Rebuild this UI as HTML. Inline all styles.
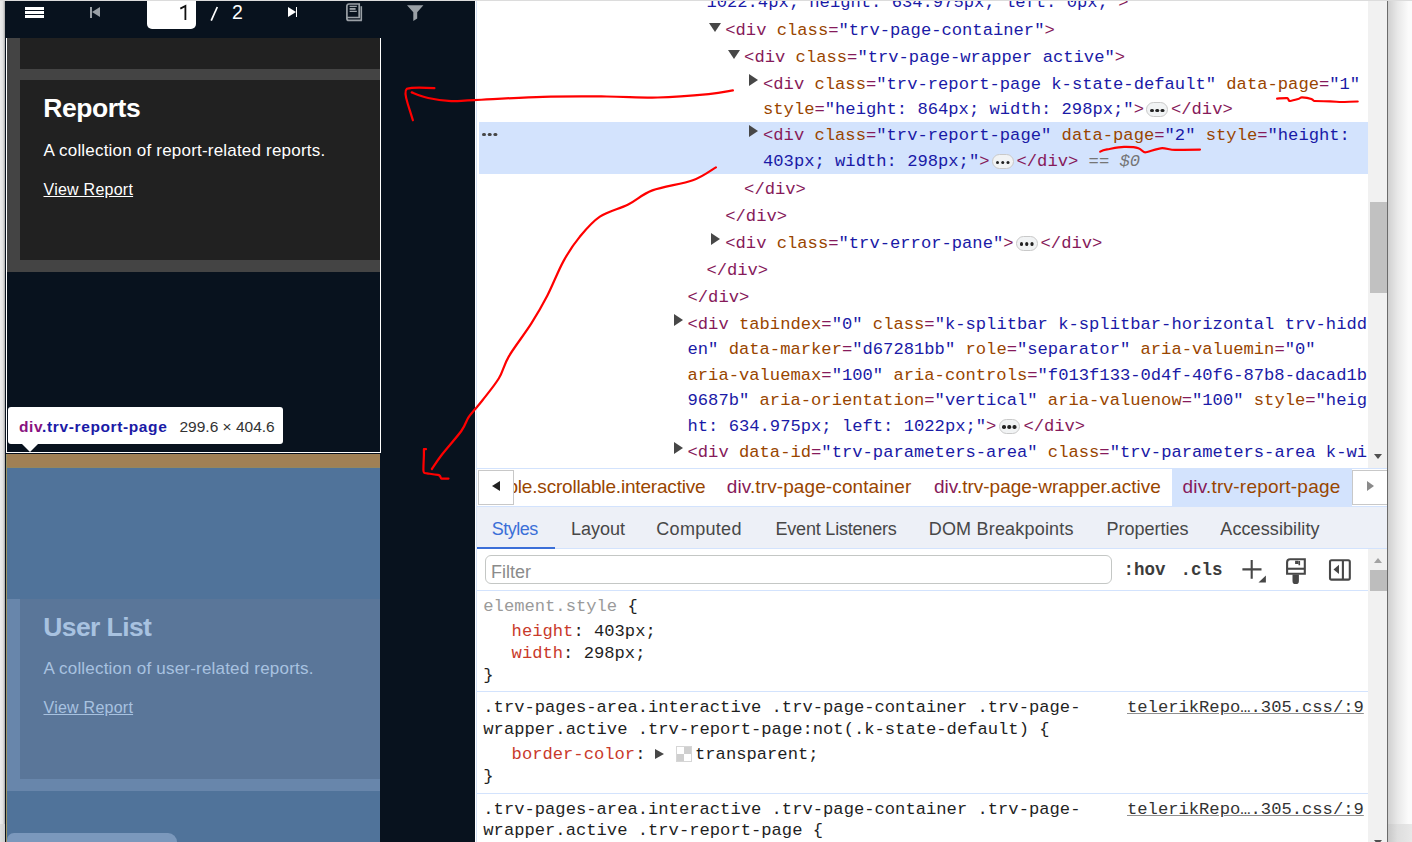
<!DOCTYPE html>
<html><head><meta charset="utf-8">
<style>
*{margin:0;padding:0;box-sizing:border-box}
html,body{width:1412px;height:842px;overflow:hidden;background:#e6e6e6;font-family:"Liberation Sans",sans-serif}
.a{position:absolute}
/* left report viewer */
#viewer{left:5px;top:1px;width:470px;height:841px;background:#08121e;overflow:hidden}
.mono{font-family:"Liberation Mono",monospace}
/* devtools */
#dt{left:475px;top:1px;width:937px;height:841px;background:#fff;overflow:hidden}
.row{position:absolute;white-space:pre;font-family:"Liberation Mono",monospace;font-size:17.17px;line-height:25.5px;height:25.5px}
.t{color:#861a5a}.n{color:#994500}.v{color:#1a1aa6}.g{color:#757575;font-style:italic}
.tri{position:absolute;width:0;height:0}
.tr-r{border-top:6px solid transparent;border-bottom:6px solid transparent;border-left:9px solid #474747}
.tr-d{border-left:6px solid transparent;border-right:6px solid transparent;border-top:9px solid #474747}
.pill{display:inline-block;width:21.5px;height:15.3px;border:1px solid #c9c9c9;border-radius:8px;background:#f1f3f4;vertical-align:-3.3px;margin:0 3px 0 2.5px;position:relative}
.pill:after{content:"";position:absolute;left:2.5px;top:5.5px;width:3.6px;height:3.6px;border-radius:50%;background:#222;box-shadow:5.25px 0 0 #222,10.5px 0 0 #222}
.sg{color:#9a9a9a}.k{color:#1f1f1f}.pr{color:#c93a2b}.lk{color:#333;text-decoration:underline;text-decoration-color:#8f8f8f}
.srow{position:absolute;white-space:pre;font-family:"Liberation Mono",monospace;font-size:17.17px;line-height:22px;height:22px;color:#1f1f1f}
.tab{position:absolute;top:518px;font-size:18px;line-height:22px;color:#474747;white-space:nowrap}
.crumb{position:absolute;top:476px;font-size:19px;line-height:24px;white-space:nowrap}
</style></head><body>

<!-- ============ LEFT VIEWER ============ -->
<div class="a" style="left:0;top:0;width:5px;height:842px;background:linear-gradient(to right,#ececec,#e2e2e2 55%,#c4c4c4 85%,#9a9a9a)"></div>
<div class="a" style="left:0;top:824px;width:5px;height:18px;background:linear-gradient(to right,#dedede,#d6d6d6 60%,#cccccc)"></div>
<div id="viewer" class="a">
  <!-- toolbar icons (coords relative to viewer: x-5, y-1) -->
  <!-- hamburger -->
  <div class="a" style="left:20px;top:6px;width:19px;height:3px;background:#fff"></div>
  <div class="a" style="left:20px;top:10px;width:19px;height:3px;background:#fff"></div>
  <div class="a" style="left:20px;top:14px;width:19px;height:3px;background:#fff"></div>
  <!-- first page -->
  <div class="a" style="left:85px;top:6px;width:2px;height:11px;background:#9aa0a6"></div>
  <div class="a" style="left:87px;top:6px;width:0;height:0;border-top:5.5px solid transparent;border-bottom:5.5px solid transparent;border-right:8px solid #9aa0a6"></div>
  <!-- page input -->
  <div class="a" style="left:141.5px;top:-2px;width:49px;height:30px;background:#fff;border-radius:0 0 5px 5px"></div>
  <svg class="a" style="left:170px;top:2px" width="20" height="20" viewBox="0 0 20 20"><path d="M5.3 5.6L10.4 3V17.1" fill="none" stroke="#111" stroke-width="1.8" stroke-linejoin="miter"/></svg>
  <svg class="a" style="left:204px;top:4px" width="16" height="18" viewBox="0 0 16 18"><path d="M2.2 15.6L8.3 2" stroke="#fff" stroke-width="1.7"/></svg>
  <div class="a" style="left:227px;top:-1px;font-size:19.5px;line-height:24px;color:#fff">2</div>
  <!-- last page -->
  <div class="a" style="left:282.6px;top:6px;width:0;height:0;border-top:5.1px solid transparent;border-bottom:5.1px solid transparent;border-left:8px solid #fff"></div>
  <div class="a" style="left:290.5px;top:6px;width:1.7px;height:10.2px;background:#fff"></div>
  <!-- doc icon -->
  <svg class="a" style="left:340px;top:2px" width="20" height="20" viewBox="0 0 20 20">
    <g fill="none" stroke="#9aa0a6">
      <path d="M1.9 15.5V3a2 2 0 0 1 2-2h10.3v13.5H1.9" stroke-width="1.7"/>
      <path d="M1.9 14.5v0.9a2 2 0 0 0 2 2h13" stroke-width="1.7"/>
      <path d="M16.3 3.2v14.2" stroke-width="1.6"/>
      <path d="M4.6 3.4h7.2M4.6 8.3h7.2" stroke-width="1.3"/>
      <path d="M4.6 5.9h6" stroke-width="1.9"/>
    </g>
  </svg>
  <!-- filter icon -->
  <svg class="a" style="left:401px;top:3px" width="18" height="18" viewBox="0 0 18 18">
    <path d="M1 1.3h16.4l-6.2 7V14.5L7.3 17V8.3z" fill="#9aa0a6"/>
  </svg>

  <!-- page 1 (relative coords: x-5, y-1) -->
  <div class="a" style="left:1px;top:37px;width:375px;height:415px;border:1px solid #fff;border-top:none"></div>
  <div class="a" style="left:2px;top:37px;width:373px;height:234px;background:#444"></div>
  <div class="a" style="left:15px;top:37px;width:360px;height:31px;background:#212121"></div>
  <div class="a" style="left:15px;top:79px;width:360px;height:180px;background:#212121"></div>
  <div class="a" style="left:38.3px;top:92px;font-size:26.5px;font-weight:bold;color:#fff;line-height:30px;white-space:nowrap;letter-spacing:-0.45px">Reports</div>
  <div class="a" style="left:38.5px;top:139.5px;font-size:17px;color:#fff;line-height:20px;white-space:nowrap;letter-spacing:0.2px">A collection of report-related reports.</div>
  <div class="a" style="left:38.5px;top:179px;font-size:16px;color:#fff;line-height:20px;white-space:nowrap;text-decoration:underline;letter-spacing:0.25px">View Report</div>

  <!-- page 2 overlay -->
  <div class="a" style="left:1px;top:453px;width:1px;height:400px;background:#9a9468"></div>
  <div class="a" style="left:2px;top:453px;width:373px;height:13px;background:#a08055"></div><div class="a" style="left:2px;top:466px;width:373px;height:1px;background:#94875f"></div>
  <div class="a" style="left:2px;top:467px;width:373px;height:380px;background:#50739a"></div>
  <div class="a" style="left:2px;top:598px;width:373px;height:192px;background:#6886ab"></div>
  <div class="a" style="left:15px;top:598px;width:360px;height:180px;background:#5a7699"></div>
  <div class="a" style="left:38.3px;top:611px;font-size:26.5px;font-weight:bold;color:#a8c2e0;line-height:30px;white-space:nowrap;letter-spacing:-0.6px">User List</div>
  <div class="a" style="left:38.5px;top:657.5px;font-size:17px;color:#a8c2e0;line-height:20px;white-space:nowrap;letter-spacing:0.2px">A collection of user-related reports.</div>
  <div class="a" style="left:38.5px;top:696.5px;font-size:16px;color:#a8c2e0;line-height:20px;white-space:nowrap;text-decoration:underline;letter-spacing:0.25px">View Report</div>
  <div class="a" style="left:2px;top:832px;width:170px;height:30px;background:#7b98bc;border-radius:7px 9px 0 0"></div>

  <!-- tooltip -->
  <div class="a" style="left:3px;top:406px;width:275px;height:37px;background:#fff;border-radius:3px"></div>
  <div class="a" style="left:17px;top:443px;width:0;height:0;border-left:8.5px solid transparent;border-right:8.5px solid transparent;border-top:8px solid #fff"></div>
  <div class="a" style="left:14px;top:416px;font-size:15.5px;line-height:20px;white-space:nowrap;letter-spacing:0.62px"><b style="color:#881280">div</b><b style="color:#1a1aa6">.trv-report-page</b></div>
  <div class="a" style="left:174.5px;top:416px;font-size:15.5px;line-height:20px;white-space:nowrap;color:#333">299.6 × 404.6</div>
</div>

<!-- ============ DEVTOOLS ============ -->
<div class="a" style="left:475px;top:1px;width:937px;height:841px;background:#fff"></div>
<div class="a" style="left:476px;top:1px;width:1px;height:841px;background:#d6e2f5"></div>
<!-- highlight row -->
<div class="a" style="left:479px;top:122px;width:889px;height:52px;background:#d3e3fd"></div>
<div class="a" style="left:481.8px;top:132.6px;width:3.8px;height:3.8px;border-radius:50%;background:#474747;box-shadow:5.7px 0 0 #474747,11.4px 0 0 #474747"></div>
<div class="row" style="left:706.38px;top:-9.83px"><span class="v">1022.4px; height: 634.975px; left: 0px;"</span><span class="t">&gt;</span></div>
<div class="row" style="left:725.25px;top:18.17px"><span class="t">&lt;div</span><span class="n"> class</span><span class="t">=</span><span class="v">"trv-page-container"</span><span class="t">&gt;</span></div>
<div class="tri tr-d" style="left:708.75px;top:23.00px"></div>
<div class="row" style="left:744.12px;top:45.17px"><span class="t">&lt;div</span><span class="n"> class</span><span class="t">=</span><span class="v">"trv-page-wrapper active"</span><span class="t">&gt;</span></div>
<div class="tri tr-d" style="left:727.62px;top:50.00px"></div>
<div class="row" style="left:763.00px;top:71.67px"><span class="t">&lt;div</span><span class="n"> class</span><span class="t">=</span><span class="v">"trv-report-page k-state-default"</span><span class="n"> data-page</span><span class="t">=</span><span class="v">"1"</span></div>
<div class="tri tr-r" style="left:749.00px;top:73.50px"></div>
<div class="row" style="left:763.00px;top:97.17px"><span class="n">style</span><span class="t">=</span><span class="v">"height: 864px; width: 298px;"</span><span class="t">&gt;</span><span class="pill"></span><span class="t">&lt;/div&gt;</span></div>
<div class="row" style="left:763.00px;top:123.27px"><span class="t">&lt;div</span><span class="n"> class</span><span class="t">=</span><span class="v">"trv-report-page"</span><span class="n"> data-page</span><span class="t">=</span><span class="v">"2"</span><span class="n"> style</span><span class="t">=</span><span class="v">"height:</span></div>
<div class="tri tr-r" style="left:749.00px;top:125.10px"></div>
<div class="row" style="left:763.00px;top:149.17px"><span class="v">403px; width: 298px;"</span><span class="t">&gt;</span><span class="pill"></span><span class="t">&lt;/div&gt;</span><span class="g"> == $0</span></div>
<div class="row" style="left:744.12px;top:176.77px"><span class="t">&lt;/div&gt;</span></div>
<div class="row" style="left:725.25px;top:203.77px"><span class="t">&lt;/div&gt;</span></div>
<div class="row" style="left:725.25px;top:230.77px"><span class="t">&lt;div</span><span class="n"> class</span><span class="t">=</span><span class="v">"trv-error-pane"</span><span class="t">&gt;</span><span class="pill"></span><span class="t">&lt;/div&gt;</span></div>
<div class="tri tr-r" style="left:711.25px;top:232.60px"></div>
<div class="row" style="left:706.38px;top:257.77px"><span class="t">&lt;/div&gt;</span></div>
<div class="row" style="left:687.50px;top:284.77px"><span class="t">&lt;/div&gt;</span></div>
<div class="row" style="left:687.50px;top:311.77px"><span class="t">&lt;div</span><span class="n"> tabindex</span><span class="t">=</span><span class="v">"0"</span><span class="n"> class</span><span class="t">=</span><span class="v">"k-splitbar k-splitbar-horizontal trv-hidd</span></div>
<div class="tri tr-r" style="left:673.50px;top:313.60px"></div>
<div class="row" style="left:687.50px;top:337.27px"><span class="v">en"</span><span class="n"> data-marker</span><span class="t">=</span><span class="v">"d67281bb"</span><span class="n"> role</span><span class="t">=</span><span class="v">"separator"</span><span class="n"> aria-valuemin</span><span class="t">=</span><span class="v">"0"</span></div>
<div class="row" style="left:687.50px;top:362.77px"><span class="n">aria-valuemax</span><span class="t">=</span><span class="v">"100"</span><span class="n"> aria-controls</span><span class="t">=</span><span class="v">"f013f133-0d4f-40f6-87b8-dacad1b</span></div>
<div class="row" style="left:687.50px;top:388.27px"><span class="v">9687b"</span><span class="n"> aria-orientation</span><span class="t">=</span><span class="v">"vertical"</span><span class="n"> aria-valuenow</span><span class="t">=</span><span class="v">"100"</span><span class="n"> style</span><span class="t">=</span><span class="v">"heig</span></div>
<div class="row" style="left:687.50px;top:413.77px"><span class="v">ht: 634.975px; left: 1022px;"</span><span class="t">&gt;</span><span class="pill"></span><span class="t">&lt;/div&gt;</span></div>
<div class="row" style="left:687.50px;top:440.37px"><span class="t">&lt;div</span><span class="n"> data-id</span><span class="t">=</span><span class="v">"trv-parameters-area"</span><span class="n"> class</span><span class="t">=</span><span class="v">"trv-parameters-area k-wi</span></div>
<div class="tri tr-r" style="left:673.50px;top:442.20px"></div>

<!-- tree scrollbar -->
<div class="a" style="left:1368px;top:1px;width:19px;height:467px;background:#f1f1f1"></div>
<div class="a" style="left:1370px;top:202px;width:17px;height:91px;background:#c1c1c1"></div>
<div class="a" style="left:1373.8px;top:454px;width:0;height:0;border-left:4.75px solid transparent;border-right:4.75px solid transparent;border-top:5.3px solid #505050"></div>
<!-- breadcrumb bar -->
<div class="a" style="left:476px;top:468px;width:911px;height:1px;background:#d3e3fd"></div>
<div class="a" style="left:1171.5px;top:469px;width:180px;height:37px;background:#d3e3fd"></div>
<div class="crumb" style="left:705.5px;top:475px;color:#994500;transform:translateX(-100%);letter-spacing:-0.18px">ble.scrollable.interactive</div>
<div class="crumb" style="left:726.8px;top:475px;letter-spacing:0.1px"><span style="color:#861a5a">div</span><span style="color:#994500">.trv-page-container</span></div>
<div class="crumb" style="left:934px;top:475px"><span style="color:#861a5a">div</span><span style="color:#994500">.trv-page-wrapper.active</span></div>
<div class="crumb" style="left:1182.5px;top:475px;letter-spacing:0.22px"><span style="color:#861a5a">div</span><span style="color:#994500">.trv-report-page</span></div>
<div class="a" style="left:478px;top:470px;width:36px;height:35px;background:#fff;border:1px solid #c8c8c8"></div>
<div class="a" style="left:492px;top:481px;width:0;height:0;border-top:5.5px solid transparent;border-bottom:5.5px solid transparent;border-right:8px solid #222"></div>
<div class="a" style="left:1352px;top:470px;width:35px;height:35px;background:#fff;border:1px solid #c8c8c8;border-right:none"></div>
<div class="a" style="left:1367px;top:481px;width:0;height:0;border-top:5px solid transparent;border-bottom:5px solid transparent;border-left:7.5px solid #8a8a8a"></div>
<div class="a" style="left:476px;top:506px;width:911px;height:1px;background:#d3e3fd"></div>
<!-- tabs -->
<div class="a" style="left:477px;top:507px;width:910px;height:41px;background:#edf0f7"></div>
<div class="a" style="left:476px;top:548px;width:911px;height:1px;background:#d3e3fd"></div>
<div class="a" style="left:477px;top:547px;width:78px;height:2px;background:#3b6fd8"></div>
<div class="tab" style="left:491.8px;color:#3b6fd8;letter-spacing:-0.5px">Styles</div>
<div class="tab" style="left:571px">Layout</div>
<div class="tab" style="left:656.3px;letter-spacing:0.3px">Computed</div>
<div class="tab" style="left:775.5px;letter-spacing:-0.2px">Event Listeners</div>
<div class="tab" style="left:928.7px;letter-spacing:0.2px">DOM Breakpoints</div>
<div class="tab" style="left:1106.4px">Properties</div>
<div class="tab" style="left:1220.3px;letter-spacing:0.1px">Accessibility</div>
<!-- styles toolbar -->
<div class="a" style="left:485px;top:555px;width:627px;height:29px;border:1px solid #c4c7c5;border-radius:6px;background:#fff"></div>
<div class="a" style="left:491px;top:560.7px;font-size:18px;line-height:22px;color:#8b8b8b">Filter</div>
<div class="a mono" style="left:1123.5px;top:562px;font-size:17.5px;line-height:17px;font-weight:bold;color:#3c3c3c;white-space:pre">:hov</div>
<div class="a mono" style="left:1180.5px;top:562px;font-size:17.5px;line-height:17px;font-weight:bold;color:#3c3c3c;white-space:pre">.cls</div>
<svg class="a" style="left:1236px;top:552px" width="120" height="36" viewBox="0 0 120 36">
  <g stroke="#474747" fill="none">
    <path d="M15.7 8v18.8M6.4 17.4h19.1" stroke-width="2.1"/>
  </g>
  <path d="M22.5 30.6L29.9 23.4V30.6z" fill="#474747"/>
  <!-- brush -->
  <path d="M51.1 21.7V10.3a3 3 0 0 1 3-3h14.7v14.4z" fill="none" stroke="#474747" stroke-width="2.1"/>
  <path d="M51 15.7h17.8v2.1H51z" fill="#474747"/>
  <path d="M59.9 9.6h1.6v1.6h-1.6zM63.3 9v4.2" stroke="#474747" stroke-width="1.6" fill="#474747"/>
  <path d="M56.5 22.5h6.4v6.4a3.2 3.2 0 0 1-6.4 0z" fill="#474747"/>
  <!-- sidebar toggle -->
  <rect x="94" y="8.2" width="19.8" height="19.4" rx="1.6" fill="none" stroke="#474747" stroke-width="2.1"/>
  <path d="M106.9 8.5v19" stroke="#474747" stroke-width="2.1"/>
  <path d="M103 12.7v9.4l-5.5-4.7z" fill="#474747"/>
</svg>
<div class="a" style="left:476px;top:590px;width:892px;height:1px;background:#d3e3fd"></div>
<div class="a" style="left:476px;top:691px;width:892px;height:1px;background:#d3e3fd"></div>
<div class="a" style="left:476px;top:793px;width:892px;height:1px;background:#d3e3fd"></div>
<div class="srow" style="left:483.30px;top:595.83px"><span class="sg">element.style </span><span class="k">{</span></div>
<div class="srow" style="left:511.60px;top:620.83px"><span class="pr">height</span><span class="k">: 403px;</span></div>
<div class="srow" style="left:511.60px;top:642.83px"><span class="pr">width</span><span class="k">: 298px;</span></div>
<div class="srow" style="left:483.30px;top:665.13px"><span class="k">}</span></div>
<div class="srow" style="left:483.30px;top:696.83px"><span class="k">.trv-pages-area.interactive .trv-page-container .trv-page-</span></div>
<div class="srow" style="left:483.30px;top:718.53px"><span class="k">wrapper.active .trv-report-page:not(.k-state-default) {</span></div>
<div class="srow" style="left:511.60px;top:743.83px"><span class="pr">border-color</span><span class="k">: </span></div>
<div class="srow" style="left:695.00px;top:743.83px"><span class="k">transparent;</span></div>
<div class="srow" style="left:483.30px;top:765.83px"><span class="k">}</span></div>
<div class="srow" style="left:483.30px;top:798.93px"><span class="k">.trv-pages-area.interactive .trv-page-container .trv-page-</span></div>
<div class="srow" style="left:483.30px;top:820.33px"><span class="k">wrapper.active .trv-report-page {</span></div>
<div class="srow" style="left:1127.00px;top:696.83px"><span class="lk">telerikRepo….305.css/:9</span></div>
<div class="srow" style="left:1127.00px;top:798.83px"><span class="lk">telerikRepo….305.css/:9</span></div>

<!-- border-color triangle + swatch -->
<div class="a" style="left:654.5px;top:749px;width:0;height:0;border-top:5.5px solid transparent;border-bottom:5.5px solid transparent;border-left:9.5px solid #474747"></div>
<div class="a" style="left:676px;top:746px;width:15.5px;height:15.5px;background:linear-gradient(#cfcfcf,#cfcfcf) 7px 0/7px 7px no-repeat,linear-gradient(#cfcfcf,#cfcfcf) 0 7px/7px 7px no-repeat,#fff;border:1px solid #d6d6d6"></div>
<!-- styles scrollbar -->
<div class="a" style="left:1368px;top:549px;width:19px;height:293px;background:#f1f1f1"></div>
<div class="a" style="left:1370px;top:570px;width:17px;height:21px;background:#bdbdbd"></div>
<div class="a" style="left:1373.8px;top:557.8px;width:0;height:0;border-left:4.75px solid transparent;border-right:4.75px solid transparent;border-bottom:5.3px solid #a3a3a3"></div>
<div class="a" style="left:1374px;top:840px;width:0;height:0;border-left:4.75px solid transparent;border-right:4.75px solid transparent;border-top:5.3px solid #505050"></div>
<!-- right edge -->
<div class="a" style="left:1387px;top:1px;width:1px;height:841px;background:#6b6b6b"></div>
<div class="a" style="left:1388px;top:1px;width:24px;height:823px;background:linear-gradient(to right,#d0d0d0,#e8e8e8 40%,#fbfbfb 85%)"></div>
<div class="a" style="left:1388px;top:824px;width:24px;height:18px;background:linear-gradient(to right,#c8c8c8,#dedede 40%,#e8e8e8)"></div>
<!-- annotations -->
<svg class="a" style="left:0;top:0" width="1412" height="842" viewBox="0 0 1412 842">
  <g fill="none" stroke="#ff0000" stroke-width="2.2" stroke-linecap="round" stroke-linejoin="round">
    <path d="M732.9 90.4C728.9 91.0 721.3 93.0 708.7 94.2C696.2 95.4 674.7 97.2 657.7 97.5C640.7 97.9 625.8 96.6 606.7 96.5C587.6 96.4 565.1 96.2 543.0 96.8C520.9 97.4 489.4 99.4 474.1 100.1C458.8 100.8 458.8 101.4 451.2 101.1C443.5 100.8 434.8 99.5 428.2 98.0C421.7 96.6 414.4 93.4 411.7 92.4"/>
    <path d="M434.4 88.2C425 87.6 411 87.4 406.8 88.8C404.6 90.5 405.6 97 407.8 104S411.8 116.5 412.9 120.3"/>
    <path d="M715.9 167.4C712.0 169.5 703.4 176.5 692.8 180.3C682.3 184.1 663.2 186.4 652.4 190.4C641.6 194.4 636.9 200.2 628.2 204.5C619.4 208.9 608.0 211.3 599.9 216.7C591.8 222.1 585.8 229.5 579.7 236.9C573.6 244.3 568.9 251.3 563.5 261.1C558.1 270.9 552.8 285.0 547.4 295.5C542.0 305.9 537.6 313.6 531.2 323.7C524.8 333.8 514.4 347.0 509.0 356.1C503.6 365.2 503.3 371.0 498.9 378.3C494.5 385.6 486.6 394.9 482.7 400.0C478.8 405.1 477.6 406.1 475.2 409.0C472.8 411.9 470.6 413.9 468.3 417.6C466.0 421.3 465.7 424.9 461.3 431.0C456.9 437.1 446.9 448.2 442.0 454.5C437.1 460.8 433.6 466.6 431.9 469.0"/>
    <path d="M426 449.2H423.9V455.6C423.6 462 423.4 466 423.4 470S425 473 427.1 473.3S434 474.5 437.8 474.9S440 478.6 441.6 478.6H448.5"/>
    <path d="M1277.1 98.6C1282 98.3 1286 98 1287.3 98.2S1288.5 101 1289.6 101S1296 99.5 1298.2 99S1300 97.3 1302 97.3S1309 98 1311.4 99S1313 101 1314.5 101S1325 101.3 1330 101.4S1338 102 1341.8 102S1352 101.6 1357.7 101.5"/>
    <path d="M1100.2 151.6C1102 150.5 1104 149.8 1107 149.4S1118 147 1124 146.9S1135 147 1138.4 148.2S1143 152.4 1145.2 152.4S1158 148.2 1162.2 148.2S1170 149.9 1175 149.9S1190 149.6 1200 149.6"/>
  </g>
</svg>
<!-- top strip -->
<div class="a" style="left:0;top:0;width:1412px;height:1px;background:#dcdcdc"></div>

</body></html>
